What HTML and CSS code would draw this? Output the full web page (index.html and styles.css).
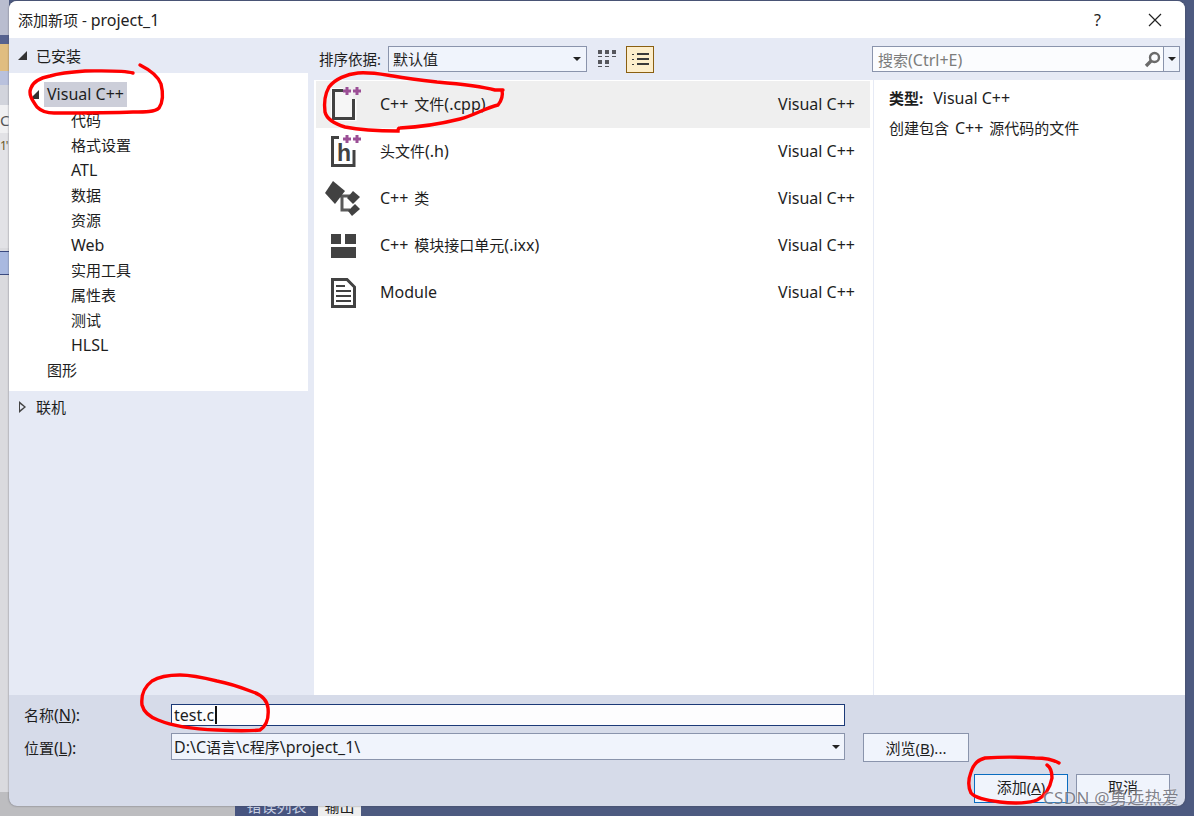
FILE: index.html
```html
<!DOCTYPE html>
<html lang="zh-CN">
<head>
  <meta charset="utf-8">
  <title>添加新项 - project_1</title>
  <link rel="stylesheet" href="styles.css">
</head>
<body>
  <!-- IDE window behind the dialog -->
  <div class="ide">
    <div class="ide-top">
      <div class="ide-strip">
        <div class="strip-a"></div>
        <div class="strip-b"></div>
        <div class="strip-c"></div>
        <div class="strip-d"></div>
        <div class="strip-e"></div>
        <div class="strip-f">C</div>
        <div class="strip-g">1'</div>
        <div class="strip-h"></div>
        <div class="strip-i"></div>
        <div class="strip-j"></div>
      </div>
    </div>
    <div class="ide-tabs">
      <div class="tabs-blank"></div>
      <div class="tab tab-off">错误列表</div>
      <div class="tab tab-on">输出</div>
    </div>
  </div>

  <div class="dialog">
    <div class="titlebar">
      <span class="title">添加新项 - <span class="lat">project_1</span></span>
      <span class="help">?</span>
      <svg class="close" width="14" height="14" viewBox="0 0 14 14"><path d="M1 1 13 13M13 1 1 13"/></svg>
    </div>

    <div class="main">
      <!-- template tree -->
      <div class="side">
        <div class="side-head"><i class="tri-open"></i>已安装</div>
        <div class="tree">
          <div class="tree-row lvl1"><i class="tri-open"></i><span class="tree-sel lat">Visual C++</span></div>
          <div class="tree-row lvl2">代码</div>
          <div class="tree-row lvl2">格式设置</div>
          <div class="tree-row lvl2 lat">ATL</div>
          <div class="tree-row lvl2">数据</div>
          <div class="tree-row lvl2">资源</div>
          <div class="tree-row lvl2 lat">Web</div>
          <div class="tree-row lvl2">实用工具</div>
          <div class="tree-row lvl2">属性表</div>
          <div class="tree-row lvl2">测试</div>
          <div class="tree-row lvl2 lat">HLSL</div>
          <div class="tree-row lvl1">图形</div>
        </div>
        <div class="side-head online"><i class="tri-closed"></i>联机</div>
      </div>

      <div class="toolbar">
        <span class="sort-label">排序依据:</span>
        <div class="combo sort-combo"><span>默认值</span><i class="arrow"></i></div>
        <svg class="view-grid" width="20" height="20" viewBox="0 0 20 20">
          <rect x="1" y="1" width="4" height="4"/><rect x="8" y="1" width="4" height="4"/><rect x="15" y="1" width="4" height="4"/>
          <rect x="1" y="7" width="4" height="1"/><rect x="8" y="7" width="4" height="1"/><rect x="15" y="7" width="4" height="1"/>
          <rect x="1" y="11" width="4" height="4"/><rect x="8" y="11" width="4" height="4"/>
          <rect x="1" y="17" width="4" height="1"/><rect x="8" y="17" width="4" height="1"/>
        </svg>
        <div class="view-list">
          <svg width="17" height="15" viewBox="0 0 17 15">
            <rect x="0" y="2" width="2" height="1"/><rect x="5" y="1" width="12" height="2"/>
            <rect x="0" y="7" width="2" height="1"/><rect x="5" y="6" width="12" height="2"/>
            <rect x="0" y="12" width="2" height="1"/><rect x="5" y="11" width="12" height="2"/>
          </svg>
        </div>
      </div>

      <div class="search-wrap">
        <div class="search">
          <span class="search-text">搜索<span class="lat">(Ctrl+E)</span></span>
          <svg class="search-icon" width="17" height="17" viewBox="0 0 17 17">
            <circle cx="10.5" cy="6.5" r="4.5"/><path d="M7 10 2 15"/>
          </svg>
          <div class="search-drop"><i class="arrow"></i></div>
        </div>
      </div>

      <!-- item templates -->
      <div class="list">
        <div class="item item-sel">
          <svg class="item-icon" width="40" height="40" viewBox="0 0 40 40">
            <path class="halo" d="M20 5.5H10.5V33.5H31V14"/>
            <rect class="page" x="11" y="6" width="19" height="27"/>
            <path class="line" d="M20 5.5H10.5V33.5H30.5V14"/>
            <path class="plus" d="M20 6h8M24 2v8M30 6h8M34 2v8"/>
          </svg>
          <span class="item-name"><span class="lat">C++</span> 文件<span class="lat">(.cpp)</span></span><span class="item-lang lat">Visual C++</span>
        </div>
        <div class="item">
          <svg class="item-icon" width="40" height="40" viewBox="0 0 40 40">
            <path class="line" d="M16 5.5H9.5V33.5H31V18"/>
            <text class="h-glyph" x="14" y="29">h</text>
            <path class="plus" d="M20 7h8M24 3v8M30 7h8M34 3v8"/>
          </svg>
          <span class="item-name">头文件<span class="lat">(.h)</span></span><span class="item-lang lat">Visual C++</span>
        </div>
        <div class="item">
          <svg class="item-icon" width="40" height="40" viewBox="0 0 40 40">
            <path class="link" d="M17 17H27M19 17V31H27"/>
            <polygon class="solid" points="2,14 10,2 22,12 12,25"/>
            <polygon class="solid" points="30,12 37,18 30,25 24,19"/>
            <polygon class="solid" points="25,32 32,25 37,30 29,37"/>
          </svg>
          <span class="item-name"><span class="lat">C++</span> 类</span><span class="item-lang lat">Visual C++</span>
        </div>
        <div class="item">
          <svg class="item-icon" width="40" height="40" viewBox="0 0 40 40">
            <rect class="solid" x="8" y="8" width="10" height="10"/>
            <rect class="solid" x="22" y="8" width="11" height="10"/>
            <rect class="solid" x="8" y="21" width="25" height="11"/>
          </svg>
          <span class="item-name"><span class="lat">C++</span> 模块接口单元<span class="lat">(.ixx)</span></span><span class="item-lang lat">Visual C++</span>
        </div>
        <div class="item">
          <svg class="item-icon" width="40" height="40" viewBox="0 0 40 40">
            <path class="line" d="M9.5 6.5H24L31.5 14V33.5H9.5Z"/>
            <path class="text-lines" d="M13 13H22M13 18H28M13 23H28M13 28H28"/>
          </svg>
          <span class="item-name lat">Module</span><span class="item-lang lat">Visual C++</span>
        </div>
      </div>

      <div class="details">
        <p class="detail-type"><b>类型:</b><span class="lat">Visual C++</span></p>
        <p class="detail-desc">创建包含 <span class="lat">C++</span> 源代码的文件</p>
      </div>
    </div>

    <div class="footer">
      <label class="field-label">名称<span class="lat">(<u>N</u>):</span></label>
      <div class="name-box"><span class="lat">test.c</span><i class="caret"></i></div>
      <div></div>
      <label class="field-label">位置<span class="lat">(<u>L</u>):</span></label>
      <div class="combo path-combo"><span><span class="lat">D:\C</span>语言<span class="lat">\c</span>程序<span class="lat">\project_1\</span></span><i class="arrow"></i></div>
      <button class="btn browse">浏览(<u>B</u>)...</button>
      <div class="actions">
        <button class="btn btn-default">添加(<u>A</u>)</button>
        <button class="btn">取消</button>
      </div>
    </div>
  </div>

  <!-- pen marks on top of the dialog -->
  <svg class="pen" width="1194" height="816" viewBox="0 0 1194 816">
    <path d="M133 73C122 70 100 71 85 71C70 72 60 73 50 76C40 78 33 82 31 88C28 94 32 100 37 107C41 111 46 113 54 113C80 113 110 113 133 112C145 112 155 112 159 108C163 102 163 92 161 84C158 76 150 70 140 65"/>
    <path d="M503 90 495 90C480 86 460 84 437 82C420 80 405 78 393 76C380 74 370 72 358 73C347 74 335 79 329 87C325 94 324 104 325 112C327 120 335 124 345 127C360 130 380 131 398 131C398 129 399 128 400 128C420 127 440 124 460 119C475 115 485 108 498 105C502 100 503 95 502 90"/>
    <path d="M253 692C240 687 228 683 217 681C205 678 190 675 180 675C170 675 160 676 152 681C144 687 141 696 142 705C144 713 150 717 158 720C170 725 190 729 217 730C235 731 250 731 260 730C266 726 269 718 268 708C267 700 262 695 253 692"/>
    <path d="M1059 763C1052 759 1045 758 1035 758C1020 757 1000 757 985 758C977 760 973 765 971 772C968 780 968 787 971 793C975 798 985 800 1000 802C1015 804 1030 803 1037 800C1045 796 1050 788 1052 778C1052 772 1050 767 1047 765"/>
  </svg>
  <div class="watermark">CSDN @勇远热爱</div>
</body>
</html>
```

FILE: styles.css
```css
html, body {
  margin: 0;
  padding: 0;
}
body {
  position: relative;
  width: 1194px;
  height: 816px;
  overflow: hidden;
  background: #4d5a80;
  font-family: "Noto Sans", "Noto Sans CJK SC", sans-serif;
  font-size: 15px;
  line-height: 20px;
  color: #1e1e1e;
}
p {
  margin: 0;
}
/* latin runs sit a bit larger than the han text */
.lat {
  font-size: 16px;
}

/* ide behind */
.ide {
  display: flex;
  flex-direction: column;
  height: 816px;
}
.ide-top {
  flex: 1;
  min-height: 0;
}
.ide-strip {
  width: 9px;
  height: 100%;
  display: flex;
  flex-direction: column;
  overflow: hidden;
  background: #dadade;
  font-size: 15px;
  color: #555;
}
.strip-a { height: 35px; background: #b9bdcf; }
.strip-b { height: 9px; background: #56628f; }
.strip-c { height: 27px; background: #e0bd80; }
.strip-d { height: 14px; background: #b9c1dd; }
.strip-e { height: 20px; background: #d2d4dc; }
.strip-f { height: 28px; line-height: 30px; background: #f0f0f2; }
.strip-g { height: 115px; padding-top: 3px; box-sizing: border-box; background: #e2e2e6; color: #6b5a2a; font-size: 12px; letter-spacing: -1px; }
.strip-h { height: 1px; margin-top: 3px; background: #3a4a80; }
.strip-i { height: 22px; background: #a9b9e0; }
.strip-j { height: 1px; background: #3a4a80; }
.ide-tabs {
  display: flex;
  height: 24px;
  font-size: 15px;
  line-height: 28px;
}
.tabs-blank {
  width: 235px;
  background: #bdbdc0;
}
.tab {
  text-align: center;
  overflow: hidden;
}
.tab-off {
  width: 83px;
  background: #47547f;
  color: #c8d0e4;
}
.tab-on {
  width: 43px;
  background: #eeeeee;
  color: #1e1e1e;
}

/* dialog */
.dialog {
  position: absolute;
  left: 9px;
  top: 1px;
  width: 1176px;
  height: 805px;
  display: flex;
  flex-direction: column;
  overflow: hidden;
  border-radius: 8px;
  background: #d6dbe9;
  box-shadow: 0 0 2px rgba(60, 60, 70, .7);
}
.titlebar {
  flex: none;
  height: 37px;
  display: flex;
  align-items: center;
  padding: 0 23px 0 9px;
  background: #fff;
}
.title {
  flex: 1;
  color: #222;
}
.help {
  margin-right: 47px;
  font-size: 16px;
}
.close path {
  fill: none;
  stroke: #222;
  stroke-width: 1.2;
}

.main {
  flex: none;
  height: 657px;
  display: grid;
  grid-template-columns: 305px 560px 311px;
  grid-template-rows: 42px 1fr;
  background: #e6eaf5;
}
.side {
  grid-row: 1 / 3;
  display: flex;
  flex-direction: column;
  margin-right: 6px;
}
.side-head {
  box-sizing: border-box;
  height: 35px;
  display: flex;
  align-items: center;
  padding-left: 9px;
}
.side-head i {
  margin-right: 9px;
}
.online {
  padding-bottom: 3px;
}
.online i {
  margin-right: 10px;
}
.tree {
  height: 309px;
  padding-top: 9px;
  background: #fff;
}
.tree-row {
  height: 25px;
  display: flex;
  align-items: center;
}
.lvl1 {
  padding-left: 38px;
}
.lvl1 .tri-open {
  margin-left: -17px;
  margin-right: 8px;
}
.lvl2 {
  padding-left: 62px;
}
.tree-sel {
  height: 25px;
  margin-left: -3px;
  padding: 0 3px;
  line-height: 25px;
  background: #ccced9;
}
.tri-open {
  width: 0;
  height: 0;
  border-style: solid;
  border-width: 0 0 9px 9px;
  border-color: transparent transparent #333 transparent;
}
.tri-closed {
  position: relative;
  width: 0;
  height: 0;
  margin-left: 1px;
  border-style: solid;
  border-width: 6px 0 6px 7px;
  border-color: transparent transparent transparent #444;
}
.tri-closed::after {
  content: "";
  position: absolute;
  left: -6px;
  top: -3px;
  border-style: solid;
  border-width: 3px 0 3px 4px;
  border-color: transparent transparent transparent #e6eaf5;
}

.toolbar {
  display: flex;
  align-items: center;
  padding-left: 5px;
}
.sort-label {
  width: 69px;
  flex: none;
  font-size: 14.5px;
}
.combo {
  display: flex;
  align-items: center;
  box-sizing: border-box;
  border: 1px solid #8a94ac;
  background: #f0f4fc;
  padding-left: 4px;
}
.combo > span {
  flex: 1;
}
.arrow {
  width: 0;
  height: 0;
  border-style: solid;
  border-width: 4px 4px 0;
  border-color: #222 transparent transparent;
}
.sort-combo {
  width: 199px;
  height: 26px;
}
.sort-combo .arrow {
  margin-right: 5px;
}
.view-grid {
  margin-left: 10px;
  fill: #55565c;
}
.view-list {
  box-sizing: border-box;
  width: 28px;
  height: 27px;
  margin-left: 9px;
  display: flex;
  align-items: center;
  justify-content: center;
  border: 1px solid #8a5f10;
  background: #fdeecb;
}
.view-list svg {
  fill: #3a3a3a;
}

.search-wrap {
  margin-left: -2px;
  padding: 8px 5px 0 0;
}
.search {
  box-sizing: border-box;
  height: 26px;
  display: flex;
  align-items: center;
  border: 1px solid #8a94ac;
  background: #fbfcfe;
  padding-left: 5px;
}
.search-text {
  flex: 1;
  margin-top: 2px;
  color: #7c7c7c;
}
.search-icon {
  margin-right: 2px;
}
.search-icon circle, .search-icon path {
  fill: none;
  stroke: #6b6b6b;
}
.search-icon circle {
  stroke-width: 2.4;
}
.search-icon path {
  stroke-width: 3.4;
}
.search-drop {
  align-self: stretch;
  width: 15px;
  display: flex;
  align-items: center;
  justify-content: center;
  border-left: 1px solid #8a94ac;
  background: #f0f4fc;
}

.list {
  margin-right: 1px;
  background: #fff;
  padding-top: 1px;
  height: 615px;
  box-sizing: border-box;
}
.item {
  height: 47px;
  display: flex;
  align-items: center;
  margin-left: 2px;
  padding: 0 15px 0 7px;
  width: 554px;
  box-sizing: border-box;
}
.item-sel {
  background: #efefef;
}
.item-icon {
  flex: none;
  margin-right: 17px;
}
.item-icon .line {
  fill: none;
  stroke: #424242;
  stroke-width: 3;
}
.item-icon .halo {
  fill: none;
  stroke: #fff;
  stroke-width: 5;
}
.item-icon .page {
  fill: #f6f6f6;
}
.item-icon .plus {
  fill: none;
  stroke: #9b4f96;
  stroke-width: 3;
}
.item-icon .solid {
  fill: #424242;
}
.item-icon .link {
  fill: none;
  stroke: #5a5a5a;
  stroke-width: 3;
}
.item-icon .text-lines {
  fill: none;
  stroke: #424242;
  stroke-width: 2;
}
.h-glyph {
  font-family: "Liberation Sans", sans-serif;
  font-weight: bold;
  font-size: 23px;
  fill: #424242;
}
.item-name, .item-lang {
  margin-top: -2px;
}
.item-name {
  flex: 1;
  word-spacing: 2px;
}

.details {
  background: #fff;
  padding: 8px 10px 0 15px;
  height: 615px;
  box-sizing: border-box;
}
.detail-type b {
  margin-right: 10px;
}
.detail-desc {
  margin-top: 10px;
  word-spacing: 2px;
}

/* bottom form */
.footer {
  flex: 1;
  display: grid;
  grid-template-columns: 147px 674px 1fr;
  grid-template-rows: 22px 29px auto;
  row-gap: 7px;
  align-items: center;
  padding: 9px 15px 0;
}
.name-box {
  box-sizing: border-box;
  height: 22px;
  display: flex;
  align-items: center;
  padding-left: 2px;
  border: 1px solid #1c3a78;
  background: #fdfdfe;
}
.caret {
  width: 2px;
  height: 18px;
  margin-left: 1px;
  background: #111;
}
.path-combo {
  align-self: start;
  height: 27px;
  padding-left: 2px;
}
.path-combo .arrow {
  margin-right: 4px;
}
.btn {
  box-sizing: border-box;
  height: 29px;
  padding: 0;
  border: 1px solid #8a94ac;
  background: #f0f4fc;
  font: inherit;
  color: #1e1e1e;
}
.browse {
  justify-self: start;
  width: 106px;
  margin-left: 18px;
}
.actions {
  grid-column: 1 / -1;
  display: flex;
  justify-content: flex-end;
  gap: 8px;
  margin-top: 2px;
}
.actions .btn {
  width: 94px;
  padding-bottom: 4px;
}
.btn-default {
  border-color: #0a6cc0;
}

/* pen marks and site mark */
.pen {
  position: absolute;
  left: 0;
  top: 0;
  pointer-events: none;
}
.pen path {
  fill: none;
  stroke: #f00;
  stroke-width: 3.4;
  stroke-linecap: round;
}
.watermark {
  position: absolute;
  left: 1043px;
  top: 787px;
  font-size: 17px;
  line-height: 22px;
  letter-spacing: .3px;
  white-space: nowrap;
  color: rgba(90, 90, 100, .75);
  text-shadow: 0 0 2px rgba(255, 255, 255, .8);
}
```
